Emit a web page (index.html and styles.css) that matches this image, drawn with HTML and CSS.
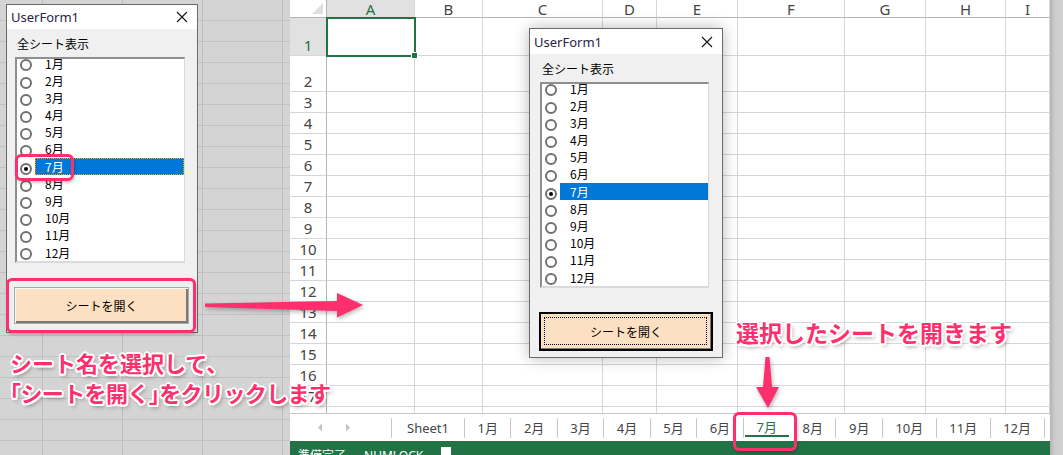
FILE: index.html
```html
<!DOCTYPE html>
<html lang="ja">
<head>
  <meta charset="UTF-8">
  <title>UserForm1 - シートを開く</title>
  <link rel="stylesheet" href="styles.css">
</head>
<body>
  <div class="screen">
    <div class="backdrop">
      <div class="userform form-left">
        <div class="uf-title">
          <span>UserForm1</span>
          <svg class="uf-close" width="12" height="12" viewBox="0 0 12 12"><path d="M1 1L11 11M11 1L1 11" stroke="#111" stroke-width="1.1"/></svg>
        </div>
        <div class="uf-body">
          <div class="uf-label">全シート表示</div>
          <div class="listbox focused"><div class="items"></div></div>
          <div class="uf-button">シートを開く</div>
        </div>
      </div>
    </div>

    <div class="excel">
      <div class="sheet">
        <div class="grid" id="grid"></div>
        <div class="selection"><span class="fill-handle"></span></div>

        <div class="userform form-mid">
          <div class="uf-title">
            <span>UserForm1</span>
            <svg class="uf-close" width="12" height="12" viewBox="0 0 12 12"><path d="M1 1L11 11M11 1L1 11" stroke="#111" stroke-width="1.1"/></svg>
          </div>
          <div class="uf-body">
            <div class="uf-label">全シート表示</div>
            <div class="listbox"><div class="items"></div></div>
            <div class="uf-button default">シートを開く</div>
          </div>
        </div>
      </div>

      <div class="tabbar">
        <div class="tab-nav">
          <svg width="6" height="9" viewBox="0 0 6 9"><path d="M5 0.5L1 4.5L5 8.5Z" fill="#c3c3c3"/></svg>
          <svg width="6" height="9" viewBox="0 0 6 9"><path d="M1 0.5L5 4.5L1 8.5Z" fill="#c3c3c3"/></svg>
        </div>
        <div class="tabs" id="tabs"></div>
      </div>
      <div class="statusbar">
        <span>準備完了</span>
        <span>NUMLOCK</span>
        <span class="status-icon"></span>
      </div>
    </div>

    <div class="edge"></div>

    <!-- annotations -->
    <div class="mark mark-radio"></div>
    <div class="mark mark-button"></div>
    <div class="mark mark-tab"></div>

    <svg class="arrows" width="1063" height="455" viewBox="0 0 1063 455">
      <path d="M205 303.5L337 301L337 293L363 305L337 317.5L337 311L205 307Z" fill="#fd2f6d"/>
      <path d="M765.5 357L769.5 357L772 387L779 387L768 408L756 387L763 387Z" fill="#fd2f6d"/>
    </svg>

    <div class="note note-left">
      <div>シート名を選択して、</div>
      <div class="tight"><span class="halt">「</span>シートを開く<span class="halt">」</span>をクリックします</div>
    </div>
    <div class="note note-right">選択したシートを開きます</div>
  </div>

  <script src="script.js"></script>
</body>
</html>
```

FILE: styles.css
```css
body {
  margin: 0;
  width: 1063px;
  height: 455px;
  overflow: hidden;
  background-color: #c9c9c9;
  font-family: "Noto Sans", "Noto Sans CJK JP", sans-serif;
}
.screen {
  position: relative;
  display: flex;
  height: 455px;
}

/* greyed excel behind the first form */
.backdrop {
  position: relative;
  flex: none;
  width: 290px;
  background-color: #d4d4d4;
  background-image:
    repeating-linear-gradient(to right, transparent 0 42px, #bdbdbd 42px 43px, transparent 43px 80px),
    repeating-linear-gradient(to bottom, transparent 0 20px, #c2c2c2 20px 21px);
}

.excel {
  flex: none;
  width: 760px;
  display: flex;
  flex-direction: column;
  background-color: #fff;
}
.sheet {
  position: relative;
  height: 413px;
  overflow: hidden;
}
.grid {
  display: grid;
  grid-template-columns: 37px 88px 68px 120px 54px 81px 107px 81px 80px 44px;
  grid-template-rows: 18px 38px 36px repeat(16, 21px);
}
.cell {
  box-sizing: border-box;
  border-right: 1px solid #d6d6d6;
  border-bottom: 1px solid #d6d6d6;
}
.col-head {
  display: flex;
  align-items: center;
  justify-content: center;
  border-bottom-color: #b4b4b4;
  font-size: 15px;
  color: #444;
}
.row-head {
  display: flex;
  align-items: flex-end;
  justify-content: center;
  border-right-color: #b4b4b4;
  font-size: 15px;
  line-height: 20px;
  color: #444;
}
.col-head.active,
.row-head.active {
  background-color: #e1e1e1;
  color: #217346;
}
.corner {
  position: relative;
  border-bottom-color: #b4b4b4;
  border-right-color: #b4b4b4;
}
.corner-mark {
  position: absolute;
  right: 3px;
  bottom: 3px;
  border-left: 11px solid transparent;
  border-bottom: 11px solid #dfdfdf;
}
.selection {
  position: absolute;
  left: 36px;
  top: 17px;
  width: 90px;
  height: 40px;
  box-sizing: border-box;
  border: 2px solid #217346;
}
.fill-handle {
  position: absolute;
  right: -4px;
  bottom: -4px;
  width: 5px;
  height: 5px;
  background-color: #217346;
  border: 1px solid #fff;
}

/* sheet tabs */
.tabbar {
  display: flex;
  align-items: center;
  height: 27px;
  border-top: 1px solid #c6c6c6;
  background-color: #fff;
}
.tab-nav {
  flex: none;
  display: flex;
  align-items: center;
  gap: 22px;
  box-sizing: border-box;
  width: 102px;
  height: 20px;
  padding-left: 27px;
  border-right: 1px solid #c6c6c6;
}
.tabs {
  display: flex;
  align-items: center;
  height: 100%;
}
.tab {
  flex: none;
  position: relative;
  height: 20px;
  padding: 0 12.5px;
  border-right: 1px solid #c6c6c6;
  font-size: 13px;
  line-height: 20px;
  white-space: nowrap;
  color: #444;
}
.tab.first {
  padding: 0 15px;
}
.tab.active {
  height: 27px;
  line-height: 27px;
  color: #217346;
  border-right: none;
  padding: 0 13px;
}
.tab.active::after {
  content: "";
  position: absolute;
  left: 1px;
  right: 1px;
  bottom: 4px;
  height: 2px;
  background-color: #217346;
}
.statusbar {
  display: flex;
  gap: 18px;
  height: 14px;
  overflow: hidden;
  padding-left: 8px;
  background-color: #217346;
  color: #fff;
  font-size: 12px;
  line-height: 29px;
}
.status-icon {
  width: 10px;
  height: 10px;
  margin-top: 6px;
  background-color: #fff;
}
.edge {
  flex: 1;
  background: linear-gradient(to right, #b4b4b4, #cdcdcd 5px, #d0d0d0);
}

/* vba user forms */
.userform {
  position: absolute;
  box-sizing: border-box;
  display: flex;
  flex-direction: column;
  border: 1px solid #6a6a6a;
  background-color: #f0f0f0;
  font-family: "Noto Sans CJK JP", sans-serif;
}
.form-left {
  left: 6px;
  top: 4px;
  width: 192px;
  height: 329px;
}
.form-mid {
  left: 239px;
  top: 28px;
  width: 194px;
  height: 330px;
  box-shadow: 0 0 14px rgba(0, 0, 0, 0.28);
}
.uf-title {
  display: flex;
  align-items: center;
  justify-content: space-between;
  height: 25px;
  padding: 0 9px 0 4px;
  background-color: #fff;
  font-family: "Noto Sans", sans-serif;
  font-size: 13px;
  color: #2a2246;
}
.form-left .uf-title {
  height: 24px;
}
.uf-body {
  display: flex;
  flex-direction: column;
  align-items: flex-start;
  padding: 0 9px;
}
.form-left .uf-body {
  padding: 0 7px;
}
.uf-label {
  margin: 7px 0 5px 3px;
  font-size: 12px;
  line-height: 16px;
  color: #000;
}
.listbox {
  box-sizing: border-box;
  width: 169px;
  height: 206px;
  margin-left: 1px;
  overflow: hidden;
  background-color: #fff;
  border-top: 2px solid #8f8f8f;
  border-left: 2px solid #8f8f8f;
  border-right: 1px solid #dadada;
  border-bottom: 2px solid #dadada;
}
.form-left .listbox {
  width: 170px;
}
.items {
  margin-top: -4.6px;
}
.item {
  position: relative;
  display: flex;
  align-items: center;
  height: 17.2px;
  font-size: 12px;
  color: #000;
}
.radio {
  position: absolute;
  left: 3px;
  top: 5px;
  width: 12px;
  height: 12px;
  box-sizing: border-box;
  border: 2px solid #707070;
  border-radius: 50%;
  background-color: #fff;
}
.item-text {
  flex: 1;
  margin-left: 18px;
  padding-left: 10px;
  line-height: 17px;
}
.item.selected .item-text {
  background-color: #0078d7;
  color: #fff;
}
.item.selected .radio::after {
  content: "";
  position: absolute;
  left: 2px;
  top: 2px;
  width: 4px;
  height: 4px;
  border-radius: 50%;
  background-color: #000;
}
.focused .item.selected .item-text {
  outline: 1px dotted #e9a23b;
  outline-offset: -1px;
}
.uf-button {
  position: relative;
  box-sizing: border-box;
  display: flex;
  align-items: center;
  justify-content: center;
  width: 175px;
  height: 37px;
  margin-top: 24px;
  background-color: #fde0c1;
  border: 1px solid #a9a9a9;
  box-shadow: inset 1px 1px #f7f7f7, inset -2px -2px #7a7a7a;
  font-size: 12px;
  color: #000;
}
.uf-button.default {
  width: 174px;
  height: 39px;
  border: 2px solid #000;
  box-shadow: inset -1px -1px #7a7a7a;
}
.uf-button.default::after {
  content: "";
  position: absolute;
  inset: 3px 4px 4px 3px;
  border: 1px dotted #000;
}

/* annotations */
.mark {
  position: absolute;
  box-sizing: border-box;
  border: 3px solid #fd2f6d;
  border-radius: 6px;
  box-shadow: 1px 2px 3px rgba(0, 0, 0, 0.2);
}
.mark-radio {
  left: 15px;
  top: 154px;
  width: 59px;
  height: 27px;
}
.mark-button {
  left: 6px;
  top: 278px;
  width: 190px;
  height: 55px;
}
.mark-tab {
  left: 733px;
  top: 412px;
  width: 64px;
  height: 39px;
}
.arrows {
  position: absolute;
  left: 0;
  top: 0;
  filter: drop-shadow(1px 2px 2px rgba(0, 0, 0, 0.3));
}
.note {
  position: absolute;
  font-family: "Noto Sans CJK JP", sans-serif;
  font-weight: 700;
  color: #fd2f6d;
  line-height: 30px;
  white-space: nowrap;
  text-shadow:
    -2px 0 #fff, 2px 0 #fff, 0 -2px #fff, 0 2px #fff,
    -1.5px -1.5px #fff, 1.5px -1.5px #fff, -1.5px 1.5px #fff, 1.5px 1.5px #fff,
    2px 3px 4px rgba(0, 0, 0, 0.4);
}
.note-left {
  left: 10px;
  top: 347px;
  font-size: 22px;
}
.note-left .tight {
  letter-spacing: -0.6px;
}
.note-right {
  left: 736px;
  top: 317px;
  font-size: 23px;
}
.halt {
  font-feature-settings: "halt";
}
```

FILE: script.js
```js
var months = [];
for (var m = 1; m <= 12; m++) {
  months.push(m + '月');
}

// list boxes on both forms, 7月 is picked
document.querySelectorAll('.listbox .items').forEach(function (items) {
  months.forEach(function (name, i) {
    var row = document.createElement('div');
    row.className = i === 6 ? 'item selected' : 'item';
    row.innerHTML = '<span class="radio"></span><span class="item-text">' + name + '</span>';
    items.appendChild(row);
  });
});

// worksheet cells
var cols = ['A', 'B', 'C', 'D', 'E', 'F', 'G', 'H', 'I'];
var html = '<div class="cell corner"><span class="corner-mark"></span></div>';
cols.forEach(function (c) {
  html += '<div class="cell col-head' + (c === 'A' ? ' active' : '') + '">' + c + '</div>';
});
for (var r = 1; r <= 18; r++) {
  html += '<div class="cell row-head' + (r === 1 ? ' active' : '') + '">' + r + '</div>';
  for (var c = 0; c < cols.length; c++) {
    html += '<div class="cell"></div>';
  }
}
document.getElementById('grid').innerHTML = html;

// sheet tabs
var tabs = document.getElementById('tabs');
['Sheet1'].concat(months).forEach(function (name, i) {
  var tab = document.createElement('div');
  tab.className = 'tab';
  if (i === 0) tab.className += ' first';
  if (name === '7月') tab.className += ' active';
  tab.textContent = name;
  tabs.appendChild(tab);
});
```
